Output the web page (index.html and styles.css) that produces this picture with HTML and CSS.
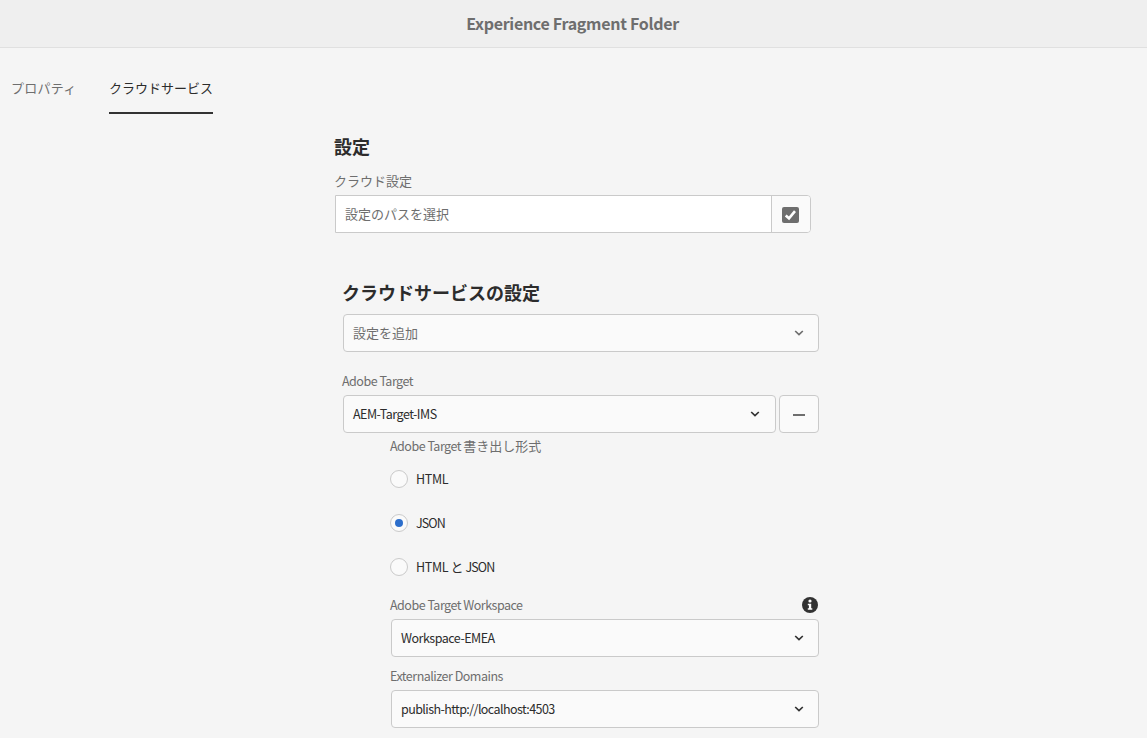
FILE: index.html
```html
<!DOCTYPE html>
<html lang="ja">
<head>
<meta charset="utf-8">
<title>Experience Fragment Folder</title>
<link rel="stylesheet" href="styles.css">
</head>
<body>
<header class="topbar"><h1 class="topbar-title">Experience Fragment Folder</h1></header>
<nav class="tabs">
  <a class="tab tab-properties">プロパティ</a>
  <a class="tab tab-active">クラウドサービス</a>
</nav>
<main class="content">
  <section class="config">
    <h2 class="heading">設定</h2>
    <div class="label">クラウド設定</div>
    <div class="path-field">
      <div class="path-input">設定のパスを選択</div>
      <div class="path-button">
        <svg width="17" height="16" viewBox="0 0 17 16"><rect width="17" height="16" rx="2" fill="#6e6e6e"/><path d="M3.7 8.4 7 11.3 13 4.2" fill="none" stroke="#fff" stroke-width="2.6"/></svg>
      </div>
    </div>
  </section>
  <section class="services">
    <h2 class="heading">クラウドサービスの設定</h2>
    <div class="select select-placeholder"><span>設定を追加</span><svg class="chevron" viewBox="0 0 10 6"><path d="M1.2 1 5 4.6 8.8 1"/></svg></div>
    <div class="label target-label latin">Adobe Target</div>
    <div class="target-row">
      <div class="select"><span class="latin">AEM-Target-IMS</span><svg class="chevron" viewBox="0 0 10 6"><path d="M1.2 1 5 4.6 8.8 1"/></svg></div>
      <div class="remove"><span class="minus"></span></div>
    </div>
    <div class="nested">
      <div class="label format-label"><span class="latin">Adobe Target </span>書き出し形式</div>
      <div class="radio"><span class="dot"></span><span class="latin latin-html">HTML</span></div>
      <div class="radio"><span class="dot"></span><span class="latin latin-json">JSON</span></div>
      <div class="radio"><span class="dot"></span><span class="both"><span class="latin latin-html">HTML </span>と<span class="latin latin-json"> JSON</span></span></div>
      <div class="sub">
        <div class="label info-label"><span class="latin">Adobe Target Workspace</span>
          <svg width="16" height="16" viewBox="0 0 16 16"><circle cx="8" cy="8" r="8" fill="#323232"/><circle cx="8" cy="4" r="1.6" fill="#fff"/><path d="M5.8 6.7H9.2V11.2H10.3V12.7H5.8V11.2H6.9V8.2H5.8Z" fill="#fff"/></svg>
        </div>
        <div class="select"><span class="latin">Workspace-EMEA</span><svg class="chevron" viewBox="0 0 10 6"><path d="M1.2 1 5 4.6 8.8 1"/></svg></div>
        <div class="label domain-label latin">Externalizer Domains</div>
        <div class="select"><span class="latin latin-url">publish-http://localhost:4503</span><svg class="chevron" viewBox="0 0 10 6"><path d="M1.2 1 5 4.6 8.8 1"/></svg></div>
      </div>
    </div>
  </section>
</main>
</body>
</html>
```
FILE: styles.css
```css
* { box-sizing: border-box; }
body {
  margin: 0;
  height: 738px;
  overflow: hidden;
  background: #f5f5f5;
  color: #2c2c2c;
  font: 13px/20px "Noto Sans CJK JP", "Noto Sans", sans-serif;
}
svg { display: block; flex: none; }
.latin { font-size: 12.5px; letter-spacing: -0.5px; }
.latin-html { letter-spacing: -0.35px; }
.latin-json { letter-spacing: -0.9px; }
.latin-url { letter-spacing: -0.58px; }
.topbar {
  height: 48px;
  background: #efefef;
  border-bottom: 1px solid #e0e0e0;
  text-align: center;
}
.topbar-title {
  margin: 0;
  padding-right: 2px;
  font-size: 16px;
  letter-spacing: -0.3px;
  line-height: 46px;
  color: #6e6e6e;
}
.tabs { display: flex; gap: 32px; padding-left: 11px; height: 66px; }
.tab { padding-top: 30px; color: #6e6e6e; }
.tab-properties { width: 66px; letter-spacing: 0.25px; }
.tab-active { color: #2c2c2c; border-bottom: 2px solid #323232; }
.content { padding: 19px 0 0 335px; }
.heading { margin: 0 0 0 -1px; font-size: 18px; line-height: 26px; }
.label { margin-left: -1px; color: #6e6e6e; white-space: pre; }
.config { width: 476px; height: 146px; }
.config .label { padding-top: 12px; }
.path-field {
  display: flex;
  height: 38px;
  margin-top: 4px;
  background: #fff;
  border: 1px solid #cacaca;
  border-radius: 0 4px 4px 0;
}
.path-input { flex: 1; padding: 8px 9px; color: #6e6e6e; }
.path-button {
  display: flex;
  align-items: center;
  justify-content: center;
  width: 39px;
  padding: 2px 2px 0 0;
  background: #fafafa;
  border-left: 1px solid #cacaca;
  border-radius: 0 3px 3px 0;
}
.services { width: 476px; margin-left: 8px; }
.select {
  display: flex;
  align-items: center;
  justify-content: space-between;
  height: 38px;
  padding: 0 14px 0 9px;
  background: #fafafa;
  border: 1px solid #cacaca;
  border-radius: 4px;
}
.chevron { width: 10px; height: 6px; fill: none; stroke: #323232; stroke-width: 1.7; }
.services > .select { margin-top: 9px; }
.select-placeholder { padding-bottom: 1px; color: #6e6e6e; }
.select-placeholder .chevron { stroke: #6e6e6e; margin-top: 1px; }
.target-label { padding-top: 19px; height: 43px; }
.target-row { display: grid; grid-template-columns: 433px 40px; gap: 3px; }
.target-row .select { padding-right: 15px; }
.remove {
  display: flex;
  align-items: center;
  justify-content: center;
  padding: 1px 1px 0 0;
  background: #fafafa;
  border: 1px solid #cacaca;
  border-radius: 4px;
}
.minus { width: 12px; height: 2px; background: #6e6e6e; }
.nested { padding: 3px 0 0 47px; }
.format-label { height: 21px; margin-left: 0; }
.radio { display: flex; align-items: center; gap: 8px; height: 44px; }
.both { white-space: pre; }
.dot {
  display: flex;
  align-items: center;
  justify-content: center;
  width: 18px;
  height: 18px;
  border: 1px solid #cacaca;
  border-radius: 50%;
  background: #fafafa;
}
.radio:nth-child(3) .dot::after {
  content: "";
  width: 8px;
  height: 8px;
  border-radius: 50%;
  background: #2c6ecb;
}
.sub { padding-left: 1px; }
.info-label { display: flex; justify-content: space-between; align-items: center; height: 30px; padding: 1px 1px 0 0; }
.domain-label { height: 33px; padding-top: 9px; }
```
